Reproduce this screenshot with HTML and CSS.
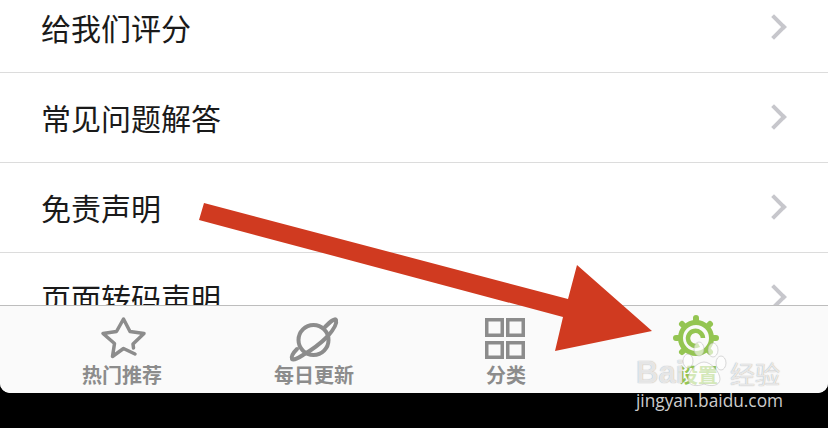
FILE: index.html
```html
<!DOCTYPE html>
<html>

<head>
  <title>设置</title>
  <link rel="stylesheet" href="styles.css">
</head>

<body>
  <div class="app">
    <div class="list">
      <div class="row"><span>给我们评分</span><i class="chevron"></i></div>
      <div class="row"><span>常见问题解答</span><i class="chevron"></i></div>
      <div class="row"><span>免责声明</span><i class="chevron"></i></div>
      <div class="row"><span>页面转码声明</span><i class="chevron"></i></div>
    </div>
    <div class="tabbar">
      <div class="tab">
        <svg class="tab-icon" viewBox="0 0 48 48"><path d="M37 39L25.500 33.500 14.500 41.500 16.500 28.500 5 18.500 18.500 16.500 25.500 4 32 16.500 46 18.500 35 29 35.500 33" fill="none" stroke="#8c8c8c" stroke-width="3.500" stroke-linejoin="round" stroke-linecap="round"/></svg>
        <span class="tab-label">热门推荐</span>
      </div>
      <div class="tab">
        <svg class="tab-icon" viewBox="0 0 48 48"><g fill="none" stroke="#8c8c8c" stroke-width="4" stroke-linecap="round"><circle cx="23.500" cy="25" r="15"/><path d="M35 12C41 6 45 3 46 5C47 8 44 14 38 21C31 28 20 36 13 40C7 44 3 45 2 44C1 42 3 38 7 34"/></g></svg>
        <span class="tab-label">每日更新</span>
      </div>
      <div class="tab">
        <svg class="tab-icon" viewBox="0 0 48 48"><g fill="none" stroke="#8c8c8c" stroke-width="3.500"><rect x="4.750" y="4.750" width="15.500" height="15.500"/><rect x="25.750" y="4.750" width="15.500" height="15.500"/><rect x="4.750" y="27.750" width="15.500" height="14.500"/><rect x="25.750" y="27.750" width="15.500" height="14.500"/></g></svg>
        <span class="tab-label">分类</span>
      </div>
      <div class="tab tab-active">
        <svg class="tab-icon" viewBox="0 0 48 48"><g fill="none" stroke="#94c552"><circle cx="22" cy="23" r="15.500" stroke-width="5"/><path d="M22 3v2M8 9l1 1M36 9l-1 1M2 23h2M40 23h2M8 37l1-1M36 37l-1-1" stroke-width="6" stroke-linecap="round"/><path d="M25 30a7.500 7.500 0 1 1 4-7" stroke-width="4.500"/></g></svg>
        <span class="tab-label">设置</span>
      </div>
    </div>
  </div>

  <svg class="arrow" viewBox="0 0 828 428"><polygon points="204,203 568,299 577,265 652,331 555,351 563,317 199,220" fill="#d03a20"/></svg>

  <div class="watermark">
    <div class="wm-logo">
      <span class="wm-bai">Bai</span>
      <svg class="wm-paw" viewBox="0 0 48 48"><g fill="#fff" fill-opacity=".6" stroke="#aaa" stroke-opacity=".45"><ellipse cx="8" cy="21" rx="5" ry="7"/><ellipse cx="19" cy="9" rx="5" ry="7"/><ellipse cx="33" cy="10" rx="5" ry="7"/><ellipse cx="41" cy="23" rx="5" ry="7"/><path d="M24 22c7 0 16 10 16 17 0 7-9 8-16 5-7 3-16 2-16-5 0-7 9-17 16-17z"/></g></svg>
      <span class="wm-cn">经验</span>
    </div>
    <div class="wm-url">jingyan.baidu.com</div>
  </div>
</body>

</html>
```
FILE: styles.css
```css
body {
  margin: 0;
  width: 828px;
  height: 428px;
  overflow: hidden;
  background-color: #000;
  font-family: "Liberation Sans", "Noto Sans CJK SC", sans-serif;
}

.app {
  height: 393px;
  display: flex;
  flex-direction: column;
  overflow: hidden;
  background-color: #fff;
  border-radius: 0 0 10px 10px;
}

.list {
  flex: 1;
  min-height: 0;
  overflow: hidden;
  margin-top: -17px;
}

.row {
  height: 87px;
  padding: 0 45px 2px 41px;
  border-bottom: 1px solid #dcdcdc;
  display: flex;
  align-items: center;
  justify-content: space-between;
  font-size: 30px;
  color: #1a1a1a;
}

.chevron {
  width: 14px;
  height: 14px;
  border-top: 4px solid #c7c7cc;
  border-right: 4px solid #c7c7cc;
  transform: rotate(45deg);
}

.tabbar {
  height: 87px;
  flex-shrink: 0;
  border-top: 1px solid #bdbdbd;
  background-color: #fafafa;
  padding: 0 34px 0 26px;
  display: grid;
  grid-template-columns: repeat(4, 192px);
}

.tab {
  display: flex;
  flex-direction: column;
  align-items: center;
  padding-top: 9px;
  font-size: 20px;
  font-weight: bold;
  line-height: 24px;
  color: #8c8c8c;
}

.tab-icon {
  width: 48px;
  height: 48px;
  overflow: visible;
}

.tab-label {
  margin-top: 1px;
}

.tab-active {
  color: #94c552;
}

.arrow {
  position: absolute;
  left: 0;
  top: 0;
  width: 828px;
  height: 428px;
}

.watermark {
  position: absolute;
  left: 636px;
  top: 356px;
  width: 150px;
}

.wm-logo {
  display: flex;
  align-items: center;
  height: 34px;
  color: rgba(255, 255, 255, .75);
  text-shadow: 0 0 1px rgba(110, 110, 110, .7);
}

.wm-bai {
  width: 44px;
  font-size: 31px;
  font-weight: bold;
  white-space: nowrap;
}

.wm-paw {
  flex-shrink: 0;
  width: 48px;
  height: 48px;
  align-self: flex-end;
  margin-bottom: 2px;
}

.wm-cn {
  margin-left: 2px;
  font-size: 25px;
  white-space: nowrap;
}

.wm-url {
  margin-top: -1px;
  font-family: "Open Sans", sans-serif;
  font-size: 17.300px;
  color: #ccc;
  white-space: nowrap;
}
```
